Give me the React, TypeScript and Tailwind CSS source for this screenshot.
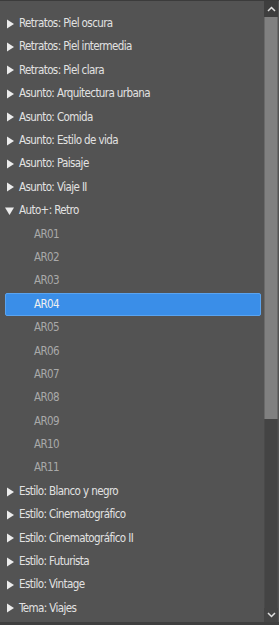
import React from "react";

type Row = { label: string; kind: "parent" | "open" | "child"; selected?: boolean };

const rows: Row[] = [
  { label: "Retratos: Piel oscura", kind: "parent" },
  { label: "Retratos: Piel intermedia", kind: "parent" },
  { label: "Retratos: Piel clara", kind: "parent" },
  { label: "Asunto: Arquitectura urbana", kind: "parent" },
  { label: "Asunto: Comida", kind: "parent" },
  { label: "Asunto: Estilo de vida", kind: "parent" },
  { label: "Asunto: Paisaje", kind: "parent" },
  { label: "Asunto: Viaje II", kind: "parent" },
  { label: "Auto+: Retro", kind: "open" },
  { label: "AR01", kind: "child" },
  { label: "AR02", kind: "child" },
  { label: "AR03", kind: "child" },
  { label: "AR04", kind: "child", selected: true },
  { label: "AR05", kind: "child" },
  { label: "AR06", kind: "child" },
  { label: "AR07", kind: "child" },
  { label: "AR08", kind: "child" },
  { label: "AR09", kind: "child" },
  { label: "AR10", kind: "child" },
  { label: "AR11", kind: "child" },
  { label: "Estilo: Blanco y negro", kind: "parent" },
  { label: "Estilo: Cinematográfico", kind: "parent" },
  { label: "Estilo: Cinematográfico II", kind: "parent" },
  { label: "Estilo: Futurista", kind: "parent" },
  { label: "Estilo: Vintage", kind: "parent" },
  { label: "Tema: Viajes", kind: "parent" },
];

function TriRight() {
  return (
    <svg width="7" height="10" viewBox="0 0 7 10" className="shrink-0">
      <path d="M0 0.5 L7 5 L0 9.5 Z" fill="#ececec" />
    </svg>
  );
}
function TriDown() {
  return (
    <svg width="9" height="8" viewBox="0 0 9 8" className="shrink-0">
      <path d="M0 0.5 L9 0.5 L4.5 8 Z" fill="#ececec" />
    </svg>
  );
}

export default function App() {
  return (
    <div
      className="w-[279px] h-[625px] bg-[#535353] border-t border-t-[#3b3b3b] border-b-[3px] border-b-[#3f3f3f] flex overflow-hidden"
      style={{ fontFamily: '"DejaVu Sans Condensed", "DejaVu Sans", sans-serif' }}
    >
      <div className="flex-1 flex flex-col pt-[11px] pl-[5px] pr-[3px]">
        {rows.map((r, i) => (
          <div
            key={i}
            className={
              "h-[23.4px] shrink-0 flex items-center text-[11.5px] tracking-[-0.6px] rounded-[2px] " +
              (r.selected
                ? "bg-[#3a8ee8] border border-[#5aa4f0] text-[#f0f0f0]"
                : r.kind === "child"
                ? "text-[#a9a9a9]"
                : "text-[#e2e2e2]")
            }
          >
            {r.kind === "parent" && (
              <div className="w-[14px] pl-[2px] flex items-center">
                <TriRight />
              </div>
            )}
            {r.kind === "open" && (
              <div className="w-[14px] flex items-center">
                <TriDown />
              </div>
            )}
            {r.kind === "child" && <div className={r.selected ? "w-[28px]" : "w-[29px]"} />}
            <span className="whitespace-nowrap">{r.label}</span>
          </div>
        ))}
      </div>
      <div className="w-[14px] flex flex-col shrink-0 mr-[1px]">
        <div className="h-[16px] bg-[#3e3e3e] flex items-center justify-center">
          <svg width="9" height="6" viewBox="0 0 9 6">
            <path d="M1 5 L4.5 1.5 L8 5" stroke="#e0e0e0" strokeWidth="1.5" fill="none" />
          </svg>
        </div>
        <div className="h-[402px] bg-[#808080] border-x border-[#6a6a6a]" />
        <div className="flex-1 bg-[#444444] border-x border-[#4a4a4a]" />
        <div className="h-[14px] bg-[#444444] flex items-center justify-center">
          <svg width="9" height="6" viewBox="0 0 9 6">
            <path d="M1 1 L4.5 4.5 L8 1" stroke="#e0e0e0" strokeWidth="1.5" fill="none" />
          </svg>
        </div>
      </div>
    </div>
  );
}
